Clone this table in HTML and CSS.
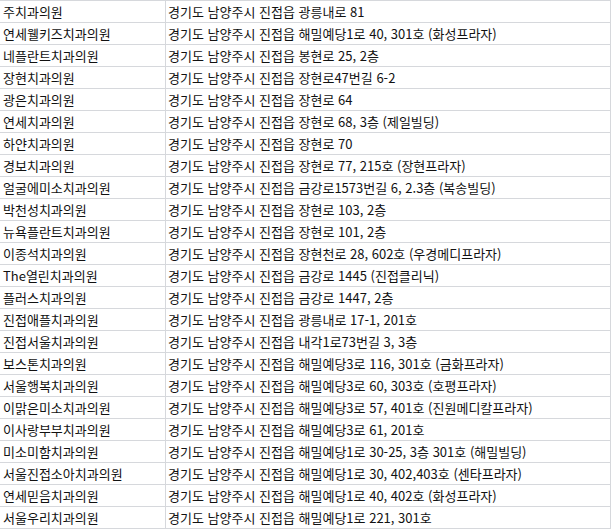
FILE: index.html
```html
<!DOCTYPE html>
<html lang="ko">
<head>
<meta charset="utf-8">
<title>치과의원 목록</title>
<link rel="stylesheet" href="styles.css">
</head>
<body>
<table class="list">
  <colgroup><col class="c-name"><col class="c-addr"></colgroup>
  <tbody>
    <tr><td>주치과의원</td><td>경기도 남양주시 진접읍 광릉내로 81</td></tr>
    <tr><td>연세웰키즈치과의원</td><td>경기도 남양주시 진접읍 해밀예당1로 40, 301호 (화성프라자)</td></tr>
    <tr><td>네플란트치과의원</td><td>경기도 남양주시 진접읍 봉현로 25, 2층</td></tr>
    <tr><td>장현치과의원</td><td>경기도 남양주시 진접읍 장현로47번길 6-2</td></tr>
    <tr><td>광은치과의원</td><td>경기도 남양주시 진접읍 장현로 64</td></tr>
    <tr><td>연세치과의원</td><td>경기도 남양주시 진접읍 장현로 68, 3층 (제일빌딩)</td></tr>
    <tr><td>하얀치과의원</td><td>경기도 남양주시 진접읍 장현로 70</td></tr>
    <tr><td>경보치과의원</td><td>경기도 남양주시 진접읍 장현로 77, 215호 (장현프라자)</td></tr>
    <tr><td>얼굴에미소치과의원</td><td>경기도 남양주시 진접읍 금강로1573번길 6, 2.3층 (복송빌딩)</td></tr>
    <tr><td>박천성치과의원</td><td>경기도 남양주시 진접읍 장현로 103, 2층</td></tr>
    <tr><td>뉴욕플란트치과의원</td><td>경기도 남양주시 진접읍 장현로 101, 2층</td></tr>
    <tr><td>이종석치과의원</td><td>경기도 남양주시 진접읍 장현천로 28, 602호 (우경메디프라자)</td></tr>
    <tr><td>The열린치과의원</td><td>경기도 남양주시 진접읍 금강로 1445 (진접클리닉)</td></tr>
    <tr><td>플러스치과의원</td><td>경기도 남양주시 진접읍 금강로 1447, 2층</td></tr>
    <tr><td>진접애플치과의원</td><td>경기도 남양주시 진접읍 광릉내로 17-1, 201호</td></tr>
    <tr><td>진접서울치과의원</td><td>경기도 남양주시 진접읍 내각1로73번길 3, 3층</td></tr>
    <tr><td>보스톤치과의원</td><td>경기도 남양주시 진접읍 해밀예당3로 116, 301호 (금화프라자)</td></tr>
    <tr><td>서울행복치과의원</td><td>경기도 남양주시 진접읍 해밀예당3로 60, 303호 (호평프라자)</td></tr>
    <tr><td>이맑은미소치과의원</td><td>경기도 남양주시 진접읍 해밀예당3로 57, 401호 (진원메디칼프라자)</td></tr>
    <tr><td>이사랑부부치과의원</td><td>경기도 남양주시 진접읍 해밀예당3로 61, 201호</td></tr>
    <tr><td>미소미함치과의원</td><td>경기도 남양주시 진접읍 해밀예당1로 30-25, 3층 301호 (해밀빌딩)</td></tr>
    <tr><td>서울진접소아치과의원</td><td>경기도 남양주시 진접읍 해밀예당1로 30, 402,403호 (센타프라자)</td></tr>
    <tr><td>연세믿음치과의원</td><td>경기도 남양주시 진접읍 해밀예당1로 40, 402호 (화성프라자)</td></tr>
    <tr><td>서울우리치과의원</td><td>경기도 남양주시 진접읍 해밀예당1로 221, 301호</td></tr>
  </tbody>
</table>
</body>
</html>
```

FILE: styles.css
```css
html, body {
  margin: 0;
  padding: 0;
  background: #ffffff;
}

.list {
  table-layout: fixed;
  width: 611px;
  border-collapse: separate;
  border-spacing: 0;
  font-family: "Noto Sans CJK KR", "Noto Sans", sans-serif;
  font-size: 13px;
  color: #111111;
}

.c-name { width: 166px; }
.c-addr { width: 445px; }

.list td {
  box-sizing: border-box;
  height: 22px;
  padding: 0 0 0 3px;
  line-height: 21px;
  border-top: 1px solid #d6d8dc;
  border-right: 1px solid #d6d8dc;
  white-space: nowrap;
  overflow: hidden;
  vertical-align: middle;
}

.list td + td {
  padding-left: 2px;
}

.list tr:last-child td {
  height: 23px;
  border-bottom: 1px solid #d6d8dc;
}
```
